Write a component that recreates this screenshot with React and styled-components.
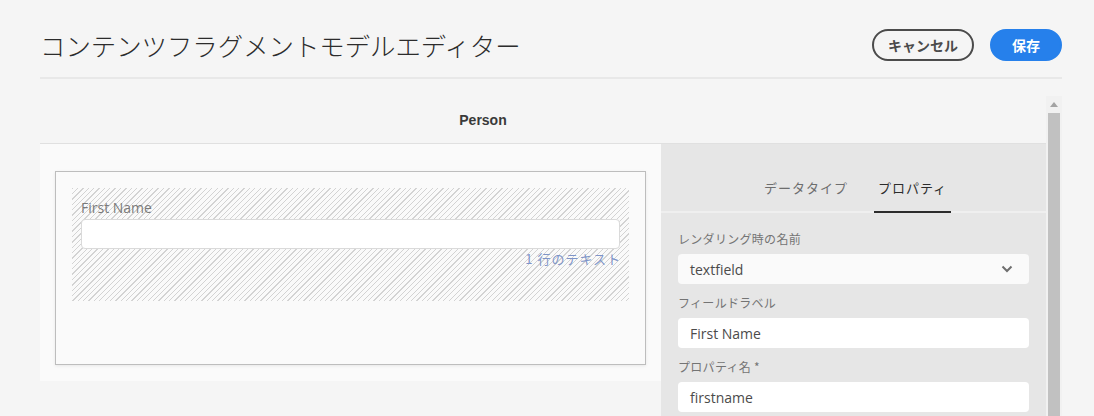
import React from "react";
import styled, { createGlobalStyle } from "styled-components";

const Global = createGlobalStyle`
  html, body { margin: 0; padding: 0; background: #f5f5f5; height: 100%; overflow: hidden; }
  body { font-family: "Noto Sans", "Noto Sans CJK JP", sans-serif; color: #4b4b4b; }
  * { box-sizing: border-box; }
`;

const Page = styled.div`
  padding: 0 32px 0 40px;
  height: 416px;
  display: flex;
  flex-direction: column;
`;

const TopBar = styled.header`
  display: flex;
  align-items: center;
  justify-content: space-between;
  height: 79px;
  padding-top: 13px;
  border-bottom: 2px solid #e8e8e8;
`;

const Title = styled.h1`
  margin: 0;
  font-family: "Noto Sans CJK JP", sans-serif;
  font-weight: 300;
  font-size: 25.4px;
  color: #2c2c2c;
  letter-spacing: 0;
`;

const Actions = styled.div`
  display: flex;
  gap: 16px;
  align-items: center;
`;

const Button = styled.button`
  height: 32px;
  border-radius: 16px;
  font-family: "Noto Sans CJK JP", sans-serif;
  font-weight: 700;
  font-size: 14px;
  padding: 0;
  width: ${(p) => p.$w}px;
  border: 2px solid ${(p) => (p.$primary ? "#2680eb" : "#4b4b4b")};
  background: ${(p) => (p.$primary ? "#2680eb" : "transparent")};
  color: ${(p) => (p.$primary ? "#ffffff" : "#4b4b4b")};
`;

const Main = styled.div`
  margin-top: 17px;
  flex: 1;
  display: flex;
  min-height: 0;
`;

const Content = styled.div`
  flex: 1;
  display: flex;
  flex-direction: column;
`;

const ModelHeader = styled.div`
  height: 48px;
  display: flex;
  align-items: center;
  justify-content: center;
  padding-right: 120px;
  border-bottom: 1px solid #e0e0e0;
  font-family: "Liberation Sans", Arial, sans-serif;
  font-weight: 700;
  font-size: 14px;
  color: #3a3a3a;
`;

const Body = styled.div`
  flex: 1;
  display: flex;
  align-items: flex-start;
`;

const Canvas = styled.div`
  width: 621px;
  background: #fafafa;
  padding: 27px 15px 16px;
`;

const Card = styled.div`
  height: 194px;
  border: 1px solid #bdbdbd;
  background: #fafafa;
  box-shadow: 0 1px 3px rgba(0, 0, 0, 0.08);
  padding: 16px;
`;

const Hatch = styled.div`
  height: 113px;
  padding: 10px 9px 0;
  background: repeating-linear-gradient(
    135deg,
    #d3d3d3 0 0.9px,
    transparent 0.9px 3.8px
  );
`;

const FieldLabel = styled.div`
  font-family: "Open Sans", sans-serif;
  font-size: 14px;
  line-height: 20px;
  color: #7a7a7a;
  margin-bottom: 1px;
`;

const PreviewInput = styled.div`
  height: 30px;
  background: #ffffff;
  border: 1px solid #dadada;
  border-radius: 4px;
`;

const Hint = styled.div`
  text-align: right;
  font-family: "Noto Sans CJK JP", sans-serif;
  font-size: 13px;
  letter-spacing: 1px;
  line-height: 20px;
  color: #7e94c8;
  margin-right: -1px;
`;

const Side = styled.aside`
  flex: 1;
  align-self: stretch;
  background: #e6e6e6;
  display: flex;
  flex-direction: column;
`;

const Tabs = styled.nav`
  height: 69px;
  display: flex;
  justify-content: center;
  align-items: flex-end;
  gap: 22px;
  padding-left: 4px;
  border-bottom: 2px solid #efefef;
`;

const Tab = styled.div`
  padding: 0 4px 13px;
  font-family: "Noto Sans CJK JP", sans-serif;
  font-size: 13px;
  letter-spacing: 1px;
  line-height: 20px;
  color: ${(p) => (p.$active ? "#2c2c2c" : "#6e6e6e")};
  border-bottom: 2px solid ${(p) => (p.$active ? "#2c2c2c" : "transparent")};
  margin-bottom: -2px;
`;

const Fields = styled.div`
  padding: 16px 17px 0;
  display: flex;
  flex-direction: column;
  gap: 9px;
`;

const Field = styled.div`
  display: flex;
  flex-direction: column;
`;

const Label = styled.label`
  font-family: "Noto Sans CJK JP", sans-serif;
  font-size: 12px;
  line-height: 20px;
  color: #747474;
  margin-bottom: 5px;
  letter-spacing: 0.3px;
`;

const Input = styled.div`
  height: 30px;
  display: flex;
  align-items: center;
  justify-content: space-between;
  padding: 0 12px;
  border-radius: 4px;
  background: ${(p) => (p.$select ? "#fafafa" : "#ffffff")};
  font-family: "Open Sans", sans-serif;
  font-size: 14px;
  color: #4b4b4b;
`;

const Scrollbar = styled.div`
  width: 16px;
  background: #f1f1f1;
  display: flex;
  flex-direction: column;
  align-items: center;
`;

const ScrollArrow = styled.div`
  height: 17px;
  display: flex;
  align-items: center;
  justify-content: center;
`;

const Thumb = styled.div`
  width: 12px;
  flex: 1;
  background: #c1c1c1;
`;

const Chevron = () => (
  <svg width="12" height="8" viewBox="0 0 12 8" style={{ marginRight: 4 }}>
    <path d="M1.5 1.5 L6 6 L10.5 1.5" fill="none" stroke="#6e6e6e" strokeWidth="2" />
  </svg>
);

const UpTriangle = () => (
  <svg width="8" height="5" viewBox="0 0 8 5">
    <path d="M0 5 L4 0 L8 5 Z" fill="#a3a3a3" />
  </svg>
);

export default function App() {
  return (
    <>
      <Global />
      <Page>
        <TopBar>
          <Title>コンテンツフラグメントモデルエディター</Title>
          <Actions>
            <Button $w={102}>キャンセル</Button>
            <Button $w={72} $primary>保存</Button>
          </Actions>
        </TopBar>
        <Main>
          <Content>
            <ModelHeader>Person</ModelHeader>
            <Body>
              <Canvas>
                <Card>
                  <Hatch>
                    <FieldLabel>First Name</FieldLabel>
                    <PreviewInput />
                    <Hint>1 行のテキスト</Hint>
                  </Hatch>
                </Card>
              </Canvas>
              <Side>
                <Tabs>
                  <Tab>データタイプ</Tab>
                  <Tab $active>プロパティ</Tab>
                </Tabs>
                <Fields>
                  <Field>
                    <Label>レンダリング時の名前</Label>
                    <Input $select>
                      textfield
                      <Chevron />
                    </Input>
                  </Field>
                  <Field>
                    <Label>フィールドラベル</Label>
                    <Input>First Name</Input>
                  </Field>
                  <Field>
                    <Label>プロパティ名 *</Label>
                    <Input>firstname</Input>
                  </Field>
                </Fields>
              </Side>
            </Body>
          </Content>
          <Scrollbar>
            <ScrollArrow>
              <UpTriangle />
            </ScrollArrow>
            <Thumb />
          </Scrollbar>
        </Main>
      </Page>
    </>
  );
}
